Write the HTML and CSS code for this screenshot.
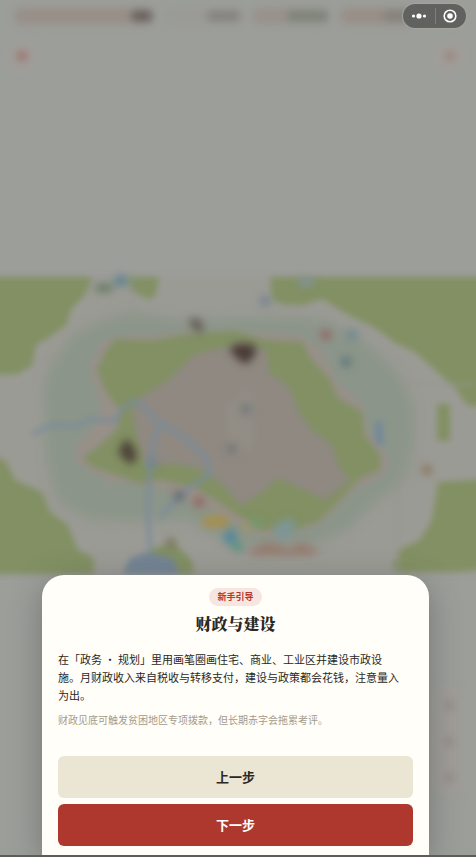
FILE: index.html
```html
<!DOCTYPE html>
<html lang="zh-CN">
<head>
  <meta charset="UTF-8">
  <meta name="viewport" content="width=device-width, initial-scale=1.0">
  <title>财政与建设</title>
  <link rel="stylesheet" href="styles.css">
</head>
<body>

  <!-- Game scene behind the dialog -->
  <div class="scene" aria-hidden="true">
    <div class="hud">
      <span class="stat stat-warm stat-wide"><i></i></span>
      <span class="stat stat-plain"><i></i></span>
      <span class="stat stat-green"><i></i></span>
      <span class="stat stat-warm"><i></i></span>
    </div>
    <div class="tools">
      <span class="tool"></span>
      <span class="tool tool-soft"></span>
    </div>
    <svg class="map" viewBox="0 277 476 297">
      <g class="map-land">
        <rect x="-30" y="277" width="536" height="297" fill="#9b9b95"/>
        <path class="map-suburb" fill="#8b9589" d="M72 335L98 322L130 312L180 320L240 318L300 317L330 322L370 345L400 375L415 410L413 450L405 480L372 505L345 532L310 546L260 550L220 538L190 520L140 522L90 520L58 502L46 460L44 380L58 355Z"/>
        <path fill="#979089" d="M98 345L112 337L200 331L300 334L320 350L340 385L364 405L368 432L390 458L385 474L355 490L318 527L260 537L210 510L160 488L110 482L76 464L76 445L96 425L100 405L90 370Z"/>
        <g fill="#829063">
          <path d="M-30 277L92 277L85 295L72 308L66 325L50 337L36 345L32 366L18 374L-30 376Z"/>
          <path d="M128 277H159L155 297L148 299L130 290Z"/>
          <path d="M270 277H506V406H468L455 388L435 370L415 352L395 343L375 328L345 313L322 299L303 305L285 305L272 300Z"/>
          <path d="M116 339L150 341L195 333L236 331L262 340L302 342L312 360L330 380L338 398L362 412L364 435L380 455L380 470L360 478L340 500L318 522L290 530L262 530L245 520L215 500L195 487L160 480L140 484L120 476L95 468L82 458L100 445L118 428L120 410L105 390L97 370L105 352Z"/>
          <path d="M-30 450L5 460L15 480L42 492L50 512L68 525L78 550L94 558V574H-30Z"/>
          <path d="M438 482L506 478V566L460 572H396L392 565L402 548L420 540L432 520Z"/>
          <rect x="437" y="404" width="13" height="37"/>
          <path d="M150 550L172 542L192 560L194 574H150Z"/>
        </g>
        <path fill="#8f8982" d="M240 344L266 350L270 374L290 387L298 410L312 430L332 445L338 465L350 480L325 500L300 488L278 478L265 490L240 506L226 488L207 472L180 464L145 464L138 440L132 412L142 396L168 380L195 354Z"/>
        <path fill="#928d85" d="M226 408L246 390L254 398V445L230 460Z"/>
        <g fill="none" stroke="#929590" stroke-width="2">
          <path d="M133 280V338M45 360H104M396 384H476M398 420V574M106 470V520M300 318L374 410"/>
        </g>
        <g fill="none" stroke="#7b8b9a" stroke-width="4">
          <path d="M32 434L52 425L78 426L91 419L114 421L125 407L135 400L160 423L185 438L205 457L210 474L193 485L176 500L159 519"/>
          <path d="M160 423L154 440L150 465L148 510L150 550"/>
        </g>
        <path fill="#748494" d="M124 570L130 558L148 552L174 559L179 574H124Z"/>
        <path fill="#74889a" d="M374 424L382 420L384 444L376 445Z"/>
      </g>
      <g class="map-pins">
        <ellipse cx="104" cy="288" rx="10" ry="4" fill="#63785f"/>
        <ellipse cx="121" cy="281" rx="7" ry="5" fill="#57808c"/>
        <ellipse cx="306" cy="282" rx="8" ry="4" fill="#8293a3"/>
        <circle cx="265" cy="301" r="5" fill="#6f7e91"/>
        <path fill="#625a52" d="M188 320L197 318L204 326L200 334L194 329Z"/>
        <path fill="#493b34" d="M229 350L236 344H252L257 350L251 360L246 364L240 361Z"/>
        <path fill="#4e4239" d="M118 452L126 438L134 447L137 458L131 465L123 458Z"/>
        <circle cx="326" cy="335" r="5" fill="#946060"/>
        <circle cx="352" cy="335" r="5" fill="#668590"/>
        <circle cx="346" cy="362" r="5" fill="#587477"/>
        <circle cx="246" cy="409" r="5" fill="#6e7479"/>
        <circle cx="232" cy="449" r="5" fill="#6e7176"/>
        <circle cx="152" cy="463" r="5" fill="#718392"/>
        <circle cx="179" cy="496" r="5" fill="#64656d"/>
        <circle cx="199" cy="502" r="5" fill="#915f59"/>
        <circle cx="171" cy="543" r="5" fill="#7c725e"/>
        <circle cx="427" cy="470" r="5" fill="#8a7259"/>
        <rect x="203" y="516" width="25" height="11" rx="4" fill="#a88f4a"/>
        <circle cx="246" cy="528" r="4" fill="#a5965d"/>
        <path fill="#51869b" d="M222 540L230 527L238 536L232 545Z"/>
        <path fill="#559180" d="M232 541L244 544L242 552L232 549Z"/>
        <circle cx="256" cy="523" r="5" fill="#6f9b72"/>
        <path fill="#7c969a" d="M274 525L290 518L296 524L286 540L276 537Z"/>
        <path fill="#967b6e" d="M248 551L268 542L290 549L300 542L320 551L312 555H250Z"/>
      </g>
    </svg>
    <div class="zoom-bar"><i></i><i></i><i></i></div>
  </div>

  <!-- Mini program capsule -->
  <div class="capsule">
    <button class="capsule-btn" type="button" aria-label="更多">
      <svg width="16" height="16" viewBox="0 0 16 16" fill="#fff">
        <circle cx="2.5" cy="8" r="1.6"/>
        <circle cx="8" cy="8" r="2.6"/>
        <circle cx="13.5" cy="8" r="1.6"/>
      </svg>
    </button>
    <button class="capsule-btn" type="button" aria-label="关闭">
      <svg width="16" height="16" viewBox="0 0 16 16">
        <circle cx="8" cy="8" r="5.8" fill="none" stroke="#fff" stroke-width="1.6"/>
        <circle cx="8" cy="8" r="2.8" fill="#fff"/>
      </svg>
    </button>
  </div>

  <!-- Guide dialog -->
  <main class="page">
    <section class="guide" role="dialog" aria-labelledby="guideTitle">
      <span class="guide-tag">新手引导</span>
      <h1 class="guide-title" id="guideTitle">财政与建设</h1>
      <p class="guide-text">在「政务 · 规划」里用画笔圈画住宅、商业、工业区并建设市政设施。月财政收入来自税收与转移支付，建设与政策都会花钱，注意量入为出。</p>
      <p class="guide-hint">财政见底可触发贫困地区专项拨款，但长期赤字会拖累考评。</p>
      <div class="guide-actions">
        <button class="btn btn-prev" type="button">上一步</button>
        <button class="btn btn-next" type="button">下一步</button>
      </div>
    </section>
  </main>

</body>
</html>
```
FILE: styles.css
```css
* {
  box-sizing: border-box;
}

body {
  margin: 0;
  min-height: 100vh;
  position: relative;
  background: #9c9e9a;
  color: #2b2723;
  font-family: "Noto Sans CJK SC", sans-serif;
}

/* scene */
.scene {
  position: absolute;
  inset: 0;
  overflow: hidden;
}

.hud {
  display: flex;
  gap: 12px;
  padding: 8px 14px;
  filter: blur(4px);
}

.stat {
  display: flex;
  flex: 0 0 76px;
  justify-content: flex-end;
  height: 16px;
  padding: 3px 0;
  border-radius: 8px;
}

.stat i {
  width: 32px;
  height: 10px;
  background: #83807c;
}

.stat-wide {
  flex-basis: 138px;
}

.stat-warm {
  background: #988e87;
}

.stat-wide i {
  width: 20px;
  background: #655c59;
}

.stat-plain {
  background: #9a9a96;
}

.stat-green {
  background: #98918b;
}

.stat-green i {
  width: 40px;
  background: #7b8277;
}

.tools {
  display: flex;
  justify-content: space-between;
  padding: 8px 10px 8px 6px;
  filter: blur(4px);
}

.tool {
  display: flex;
  align-items: center;
  justify-content: center;
  width: 32px;
  height: 32px;
  border-radius: 50%;
  background: #a09e99;
}

.tool::before {
  content: "";
  width: 12px;
  height: 12px;
  border-radius: 50%;
  background: #9b7772;
}

.tool-soft::before {
  background: #9c8680;
}

.map {
  display: block;
  width: 100%;
  margin-top: 197px;
  overflow: visible;
}

.map-land {
  filter: blur(3px);
}

.map-suburb {
  filter: blur(6px);
}

.map-pins {
  filter: blur(4px);
}

.zoom-bar {
  position: absolute;
  right: 13px;
  bottom: 62px;
  display: flex;
  flex-direction: column;
  align-items: center;
  justify-content: space-around;
  width: 28px;
  height: 108px;
  border-radius: 8px;
  background: #a09d98;
  filter: blur(4px);
}

.zoom-bar i {
  width: 9px;
  height: 9px;
  border-radius: 50%;
  background: #8b8884;
}

/* capsule */
.capsule {
  position: absolute;
  top: 4px;
  right: 10px;
  z-index: 2;
  display: flex;
  width: 63px;
  height: 24px;
  border-radius: 12px;
  background: #61625f;
  box-shadow: 0 0 0 1px #a3a49f;
}

.capsule-btn {
  display: flex;
  flex: 1;
  align-items: center;
  justify-content: center;
  padding: 0;
  border: none;
  background: none;
  cursor: pointer;
}

.capsule-btn + .capsule-btn {
  position: relative;
}

.capsule-btn + .capsule-btn::before {
  content: "";
  position: absolute;
  left: 0;
  top: 4px;
  bottom: 4px;
  width: 1px;
  background: #7e7f7c;
}

/* guide */
.page {
  position: relative;
  display: flex;
  flex-direction: column;
  justify-content: flex-end;
  min-height: 100vh;
  padding: 0 47px 0 42px;
  border-bottom: 2px solid #5c5c5a;
  overflow: hidden;
}

.guide {
  display: flex;
  flex-direction: column;
  align-items: center;
  padding: 13px 16px 9px;
  border-radius: 22px 22px 0 0;
  background: #fffef9;
  box-shadow: 0 8px 32px rgba(60, 60, 60, 0.4);
}

.guide-tag {
  padding: 0 8px;
  border-radius: 9px;
  background: #f6e5e0;
  color: #b5382f;
  font-size: 9px;
  font-weight: 700;
  line-height: 18px;
}

.guide-title {
  margin: 6px 0 14px;
  font-family: "Noto Serif CJK SC", "Noto Sans CJK SC", serif;
  font-size: 16px;
  font-weight: 900;
  line-height: 24px;
}

.guide-text {
  width: 100%;
  margin: 0;
  padding-right: 10px;
  font-size: 11px;
  line-height: 18px;
}

.guide-hint {
  width: 100%;
  margin: 8px 0 28px;
  color: #a39b8b;
  font-size: 10px;
  line-height: 16px;
}

.guide-actions {
  display: flex;
  flex-direction: column;
  gap: 6px;
  width: 100%;
}

.btn {
  height: 42px;
  padding: 0 0 2px;
  border: none;
  border-radius: 6px;
  font-family: inherit;
  font-size: 13px;
  font-weight: 700;
  cursor: pointer;
}

.btn-prev {
  background: #ebe5d4;
  color: #2b2723;
}

.btn-next {
  background: #af382e;
  color: #fff;
}
```
